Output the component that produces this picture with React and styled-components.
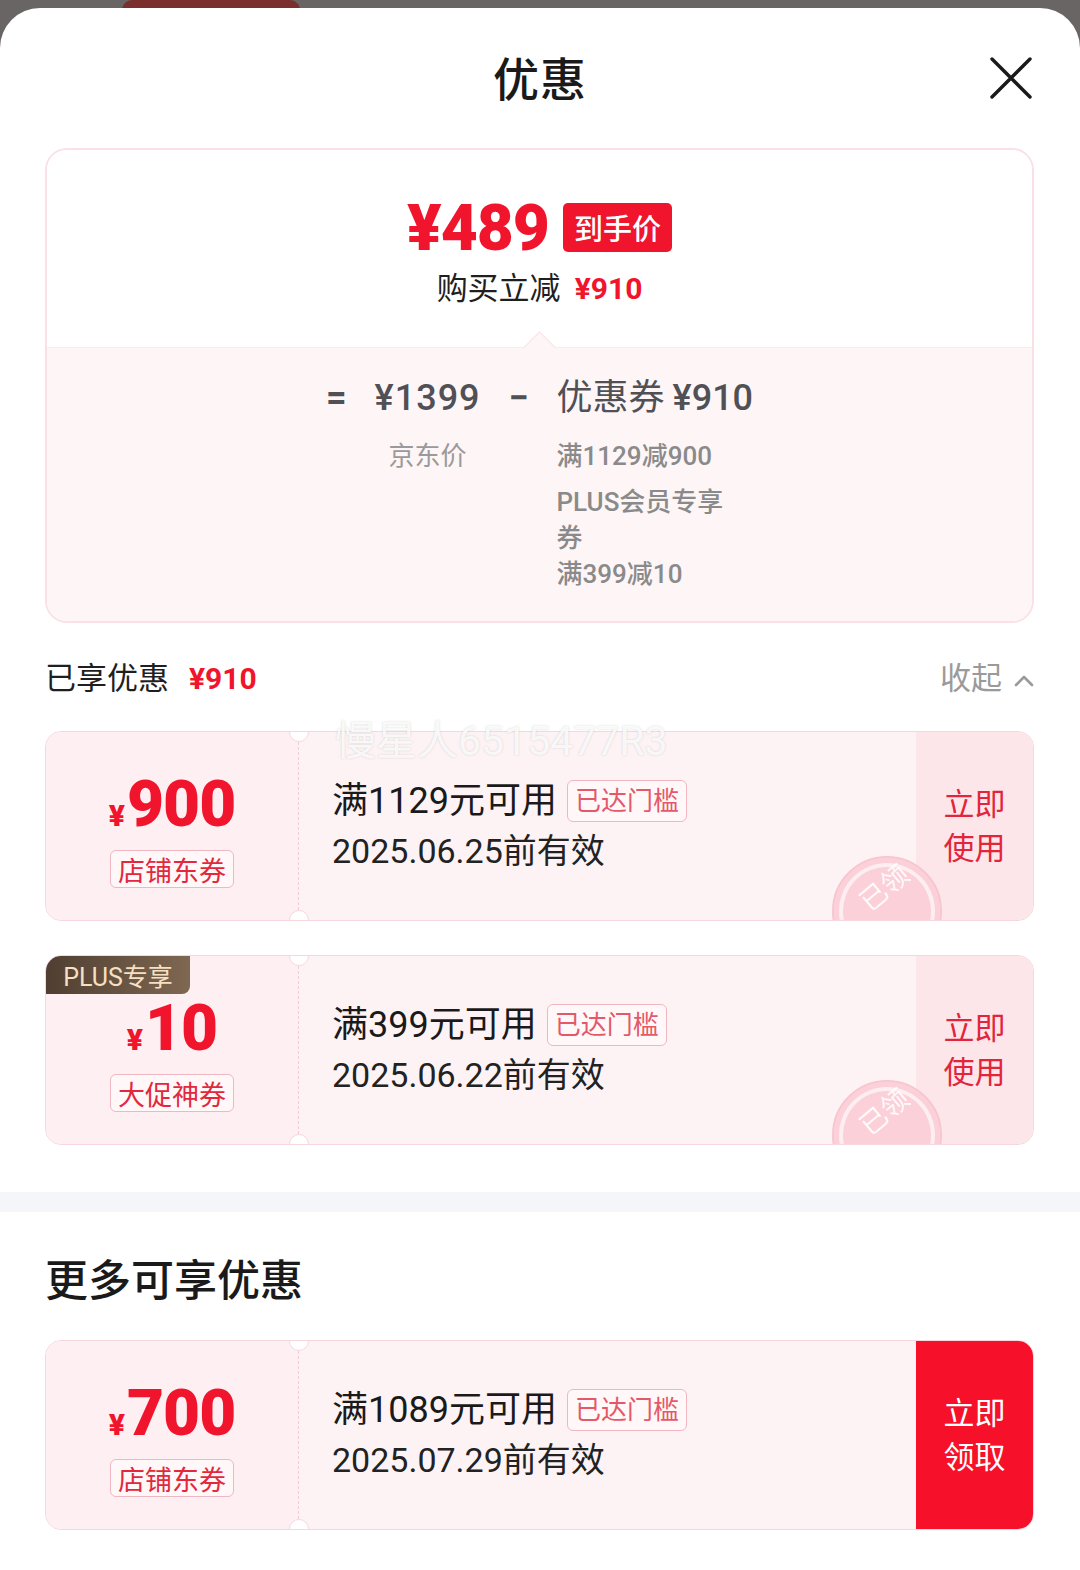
import React from "react";
import styled, { createGlobalStyle } from "styled-components";

const CJK = '"Noto Sans CJK SC", sans-serif';
const NUM = 'Roboto, "Noto Sans CJK SC", sans-serif';
const RED = "#f0142c";

const GlobalStyle = createGlobalStyle`
  html, body {
    margin: 0;
    padding: 0;
    background: #6a6565;
    font-family: ${CJK};
  }
  * { box-sizing: border-box; }
`;

const TopStrip = styled.div`
  height: 8px;
  position: relative;
  overflow: hidden;
  .blob {
    margin-left: 122px;
    width: 178px;
    height: 20px;
    border-radius: 14px;
    background: #7a2f2d;
  }
`;

const Sheet = styled.div`
  background: #fff;
  border-radius: 40px 40px 0 0;
  min-height: 1562px;
  overflow: hidden;
`;

const Header = styled.div`
  height: 140px;
  display: grid;
  grid-template-columns: 1fr auto 1fr;
  align-items: center;
  padding: 0 48px 0 48px;
`;

const Title = styled.div`
  grid-column: 2;
  font-size: 46px;
  font-weight: 500;
  color: #1a1a1a;
  letter-spacing: 1px;
  margin-top: -4px;
`;

const Close = styled.div`
  grid-column: 3;
  justify-self: end;
  width: 42px;
  height: 42px;
  display: flex;
`;

const Section = styled.div`
  padding: 0 46px 0 45px;
  position: relative;
`;

const SummaryCard = styled.div`
  border: 2px solid #fbe0e5;
  border-radius: 22px;
  overflow: hidden;
`;

const SummaryTop = styled.div`
  height: 197px;
  display: flex;
  flex-direction: column;
  align-items: center;
  padding-top: 48px;
  background: #fff;
`;

const PriceRow = styled.div`
  display: flex;
  align-items: center;
  gap: 14px;
`;

const BigPrice = styled.span`
  font-family: ${NUM};
  font-weight: 900;
  font-size: 64px;
  line-height: 62px;
  color: ${RED};
  letter-spacing: -1px;
`;

const Badge = styled.span`
  height: 49px;
  padding: 0 11px;
  display: flex;
  align-items: center;
  background: ${RED};
  color: #fff;
  font-size: 29px;
  font-weight: 500;
  border-radius: 5px;
  margin-top: -4px;
`;

const SaveLine = styled.div`
  margin-top: 6px;
  font-size: 31px;
  color: #1f1f1f;
  line-height: 40px;
  b {
    font-family: ${NUM};
    font-weight: 700;
    color: ${RED};
    font-size: 30px;
    margin-left: 14px;
  }
`;

const SummaryBottom = styled.div`
  position: relative;
  background: #fdf5f6;
  border-top: 1px solid #fbe9ec;
  padding: 28px 0 29px;
  display: grid;
  grid-template-columns: auto auto auto auto;
  justify-content: center;
  column-gap: 28px;
  &::before {
    content: "";
    position: absolute;
    left: 50%;
    top: -12px;
    width: 22px;
    height: 22px;
    margin-left: -12px;
    background: #fdf5f6;
    border-top: 1px solid #fbe3e7;
    border-left: 1px solid #fbe3e7;
    transform: rotate(45deg);
  }
`;

const FormulaCell = styled.div`
  font-family: ${NUM};
  font-size: 36px;
  font-weight: ${(p) => (p.$bold ? 700 : 500)};
  color: #505055;
  line-height: 44px;
  white-space: nowrap;
  text-align: ${(p) => p.$align || "left"};
  letter-spacing: ${(p) => (p.$wide ? "1px" : "0")};
  em {
    font-style: normal;
    font-weight: 400;
    margin-right: 8px;
  }
`;

const SubCell = styled.div`
  margin-top: 18px;
  font-family: ${NUM};
  font-size: 26px;
  color: ${(p) => (p.$light ? "#9a9a9a" : "#8a8a8a")};
  line-height: 36px;
  text-align: ${(p) => p.$align || "left"};
  display: flex;
  flex-direction: column;
  gap: 10px;
`;

const CouponGroup = styled.div`
  max-width: 184px;
  font-weight: 500;
`;

const EnjoyedRow = styled.div`
  margin-top: 22px;
  height: 60px;
  display: flex;
  align-items: center;
  justify-content: space-between;
`;

const EnjoyedLabel = styled.div`
  font-size: 31px;
  color: #1f1f1f;
  b {
    font-family: ${NUM};
    font-weight: 700;
    color: ${RED};
    font-size: 30px;
    margin-left: 20px;
  }
`;

const Collapse = styled.div`
  font-size: 31px;
  color: #9a9a9a;
  display: flex;
  align-items: center;
  gap: 12px;
  svg {
    margin-top: 10px;
  }
`;

const CouponList = styled.div`
  margin-top: ${(p) => p.$top || 26}px;
  display: flex;
  flex-direction: column;
  gap: 34px;
  position: relative;
`;

const Watermark = styled.div`
  position: absolute;
  top: -24px;
  left: 290px;
  font-size: 41px;
  font-family: ${NUM};
  color: rgba(255, 255, 255, 0.85);
  text-shadow: 0 0 2px rgba(160, 160, 160, 0.45);
  z-index: 3;
  pointer-events: none;
`;

const Coupon = styled.div`
  position: relative;
  height: 190px;
  display: flex;
  border: 1px solid #f5d7dd;
  border-radius: 16px;
  overflow: hidden;
`;

const CouponLeft = styled.div`
  width: 252px;
  flex-shrink: 0;
  background: #fdeff2;
  display: flex;
  flex-direction: column;
  align-items: center;
  padding-top: 40px;
`;

const Amount = styled.div`
  display: flex;
  align-items: baseline;
  color: ${RED};
  font-family: ${NUM};
  font-weight: 900;
  line-height: 66px;
  margin-bottom: 1px;
  i {
    font-style: normal;
    font-size: 30px;
    margin-right: 2px;
  }
  span {
    font-size: 64px;
    letter-spacing: -1px;
  }
`;

const Tag = styled.span`
  height: ${(p) => p.$h || 38}px;
  padding: 0 7px;
  display: inline-flex;
  align-items: center;
  border: 1px solid #f1b7c0;
  border-radius: 6px;
  background: #fff7f8;
  color: ${(p) => p.$color || "#e1283c"};
  font-size: ${(p) => p.$size || 27}px;
  white-space: nowrap;
`;

const CouponMain = styled.div`
  position: relative;
  flex: 1;
  background: #fdf3f5;
  border-left: 1px dashed #f3cdd4;
  padding: 45px 0 0 33px;
  &::before,
  &::after {
    content: "";
    position: absolute;
    left: -10px;
    width: 18px;
    height: 18px;
    border-radius: 50%;
    background: #fff;
    border: 1px solid #f5d7dd;
  }
  &::before { top: -10px; }
  &::after { bottom: -10px; }
`;

const RuleLine = styled.div`
  display: flex;
  align-items: center;
  gap: 10px;
  font-size: 36px;
  color: #1a1a1a;
  line-height: 48px;
  font-family: ${NUM};
`;

const DateLine = styled.div`
  margin-top: 2px;
  font-size: 34px;
  font-family: ${NUM};
  color: #222;
  line-height: 48px;
`;

const Stamp = styled.div`
  position: absolute;
  left: 533px;
  top: 124px;
  width: 110px;
  height: 110px;
  border-radius: 50%;
  background: #fbd0d8;
  border: 2px solid #f8c6cf;
  box-shadow: inset 0 0 0 5px #fbd0d8, inset 0 0 0 9px #fdeef1;
  display: flex;
  align-items: flex-start;
  justify-content: center;
  padding-top: 15px;
  span {
    transform: translateX(-4px) rotate(-40deg);
    color: rgba(255, 255, 255, 0.9);
    font-size: 27px;
    line-height: 27px;
  }
`;

const CouponAction = styled.div`
  width: 117px;
  flex-shrink: 0;
  display: flex;
  align-items: center;
  justify-content: center;
  text-align: center;
  font-size: 31px;
  line-height: 44px;
  background: ${(p) => (p.$primary ? "#f6102a" : "#fde6ea")};
  color: ${(p) => (p.$primary ? "#fff" : "#e2253b")};
  padding-bottom: 4px;
`;

const PlusBadge = styled.div`
  position: absolute;
  left: 0;
  top: 0;
  width: 144px;
  height: 38px;
  display: flex;
  align-items: center;
  justify-content: center;
  background: linear-gradient(90deg, #4f3e31, #7f6852);
  color: #f6e0c2;
  font-size: 25px;
  font-family: ${NUM};
  border-radius: 0 0 8px 0;
  z-index: 2;
`;

const Band = styled.div`
  margin-top: 47px;
  height: 20px;
  background: #f5f6f9;
`;

const MoreTitle = styled.div`
  margin-top: 35px;
  height: 60px;
  display: flex;
  align-items: center;
  font-size: 43px;
  color: #1a1a1a;
  font-weight: 500;
`;

const CloseIcon = () => (
  <svg width="42" height="42" viewBox="0 0 42 42">
    <path d="M2 2 L40 40 M40 2 L2 40" stroke="#1a1a1a" strokeWidth="3.4" strokeLinecap="round" />
  </svg>
);

const ChevronUp = () => (
  <svg width="20" height="13" viewBox="0 0 20 13">
    <path d="M2 11 L10 3 L18 11" fill="none" stroke="#9a9a9a" strokeWidth="2.6" strokeLinecap="round" strokeLinejoin="round" />
  </svg>
);

const CouponCard = ({ amount, kind, rule, date, action, primary, claimed, plus }) => (
  <Coupon>
    {plus && <PlusBadge>PLUS专享</PlusBadge>}
    <CouponLeft>
      <Amount>
        <i>¥</i>
        <span>{amount}</span>
      </Amount>
      <Tag>{kind}</Tag>
    </CouponLeft>
    <CouponMain>
      <RuleLine>
        {rule}
        <Tag $h={42} $size={26} $color="#e4596a">已达门槛</Tag>
      </RuleLine>
      <DateLine>{date}</DateLine>
      {claimed && (
        <Stamp>
          <span>已领</span>
        </Stamp>
      )}
    </CouponMain>
    <CouponAction $primary={primary}>
      {action[0]}
      <br />
      {action[1]}
    </CouponAction>
  </Coupon>
);

export default function App() {
  return (
    <>
      <GlobalStyle />
      <TopStrip>
        <div className="blob" />
      </TopStrip>
      <Sheet>
        <Header>
          <Title>优惠</Title>
          <Close>
            <CloseIcon />
          </Close>
        </Header>
        <Section>
          <SummaryCard>
            <SummaryTop>
              <PriceRow>
                <BigPrice>¥489</BigPrice>
                <Badge>到手价</Badge>
              </PriceRow>
              <SaveLine>
                购买立减<b>¥910</b>
              </SaveLine>
            </SummaryTop>
            <SummaryBottom>
              <FormulaCell $bold>=</FormulaCell>
              <FormulaCell $align="center" $wide>¥1399</FormulaCell>
              <FormulaCell $bold>−</FormulaCell>
              <FormulaCell>
                <em>优惠券</em>¥910
              </FormulaCell>
              <div />
              <SubCell $light $align="center">京东价</SubCell>
              <div />
              <SubCell>
                <CouponGroup>满1129减900</CouponGroup>
                <CouponGroup>
                  PLUS会员专享券
                  <br />
                  满399减10
                </CouponGroup>
              </SubCell>
            </SummaryBottom>
          </SummaryCard>
          <EnjoyedRow>
            <EnjoyedLabel>
              已享优惠<b>¥910</b>
            </EnjoyedLabel>
            <Collapse>
              收起
              <ChevronUp />
            </Collapse>
          </EnjoyedRow>
          <CouponList>
            <Watermark>慢星人6515477R3</Watermark>
            <CouponCard
              amount="900"
              kind="店铺东券"
              rule="满1129元可用"
              date="2025.06.25前有效"
              action={["立即", "使用"]}
              claimed
            />
            <CouponCard
              amount="10"
              kind="大促神券"
              rule="满399元可用"
              date="2025.06.22前有效"
              action={["立即", "使用"]}
              claimed
              plus
            />
          </CouponList>
        </Section>
        <Band />
        <Section>
          <MoreTitle>更多可享优惠</MoreTitle>
          <CouponList $top={33}>
            <CouponCard
              amount="700"
              kind="店铺东券"
              rule="满1089元可用"
              date="2025.07.29前有效"
              action={["立即", "领取"]}
              primary
            />
          </CouponList>
        </Section>
      </Sheet>
    </>
  );
}
